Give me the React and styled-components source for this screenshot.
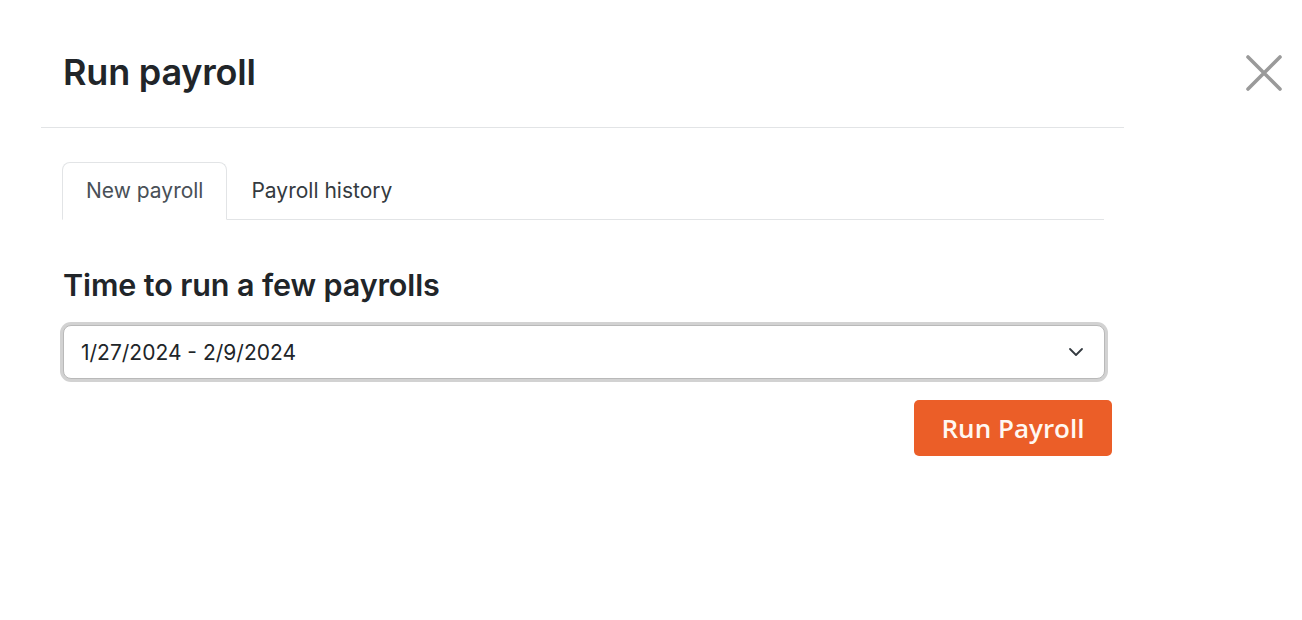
import { useState } from "react"
import styled, { createGlobalStyle } from "styled-components"

const GlobalStyle = createGlobalStyle`
  body {
    margin: 0;
    background: #ffffff;
    font-family: Inter, "Noto Sans", sans-serif;
    color: #212529;
  }
`

const periods = ["1/27/2024 - 2/9/2024", "2/10/2024 - 2/23/2024", "2/24/2024 - 3/8/2024"]

export default function App() {
  const [tab, setTab] = useState("new")
  const [period, setPeriod] = useState(periods[0])

  return (
    <>
      <GlobalStyle />
      <Page>
        <CloseButton aria-label="Close">
          <svg width="38" height="38" viewBox="0 0 38 38">
            <path d="M3 3 L35 35 M35 3 L3 35" stroke="#9a9a9a" strokeWidth="3.6" strokeLinecap="round" />
          </svg>
        </CloseButton>
        <Modal>
          <Header>
            <Title>Run payroll</Title>
          </Header>
          <Body>
            <Tabs>
              <Tab active={tab === "new"} onClick={() => setTab("new")}>New payroll</Tab>
              <Tab active={tab === "history"} onClick={() => setTab("history")}>Payroll history</Tab>
            </Tabs>
            <Heading>Time to run a few payrolls</Heading>
            <SelectWrap>
              <Select value={period} onChange={(e) => setPeriod(e.target.value)}>
                {periods.map((p) => (
                  <option key={p} value={p}>{p}</option>
                ))}
              </Select>
              <Chevron width="16" height="10" viewBox="0 0 16 10">
                <path d="M2 2 L8 8 L14 2" fill="none" stroke="#343a40" strokeWidth="1.8" strokeLinecap="round" strokeLinejoin="round" />
              </Chevron>
            </SelectWrap>
            <Actions>
              <RunButton>Run Payroll</RunButton>
            </Actions>
          </Body>
        </Modal>
      </Page>
    </>
  )
}

const Page = styled.div`
  position: relative;
  width: 1302px;
  height: 620px;
`

const CloseButton = styled.button`
  position: absolute;
  top: 54px;
  left: 1245px;
  padding: 0;
  border: none;
  background: none;
  cursor: pointer;
  display: flex;
`

const Modal = styled.div`
  margin-left: 41px;
  width: 1083px;
`

const Header = styled.div`
  padding: 50px 22px 33px;
  border-bottom: 1px solid #e2e4e6;
`

const Title = styled.h1`
  margin: 0;
  font-size: 36px;
  line-height: 44px;
  font-weight: 600;
  letter-spacing: -0.2px;
  color: #212529;
`

const Body = styled.div`
  padding: 34px 20px 0 21px;
`

const Tabs = styled.div`
  display: flex;
  border-bottom: 1px solid #e2e4e6;
`

const Tab = styled.button`
  margin-bottom: -1px;
  padding: 16px 23px;
  font-family: Inter, "Noto Sans", sans-serif;
  font-size: 21px;
  line-height: 24px;
  color: ${(p) => (p.active ? "#495057" : "#343a40")};
  background: ${(p) => (p.active ? "#ffffff" : "transparent")};
  border: 1px solid ${(p) => (p.active ? "#e2e4e6" : "transparent")};
  border-bottom-color: ${(p) => (p.active ? "#ffffff" : "transparent")};
  border-radius: 8px 8px 0 0;
  cursor: pointer;
`

const Heading = styled.h2`
  margin: 47px 0 0 1px;
  font-size: 30.5px;
  line-height: 36px;
  font-weight: 600;
  letter-spacing: -0.1px;
  color: #212529;
`

const SelectWrap = styled.div`
  position: relative;
  margin: 22px 0 0 1px;
  width: 1042px;
`

const Select = styled.select`
  display: block;
  width: 100%;
  height: 54px;
  padding: 0 50px 0 17px;
  font-family: Inter, "Noto Sans", sans-serif;
  font-size: 21px;
  color: #212529;
  background: #ffffff;
  border: 1px solid #b9b9b9;
  border-radius: 8px;
  box-shadow: 0 0 0 3px #d2d2d2;
  appearance: none;
  outline: none;
`

const Chevron = styled.svg`
  position: absolute;
  right: 21px;
  top: 22px;
  pointer-events: none;
`

const Actions = styled.div`
  display: flex;
  justify-content: flex-end;
  margin-top: 21px;
  margin-right: -8px;
`

const RunButton = styled.button`
  width: 198px;
  height: 56px;
  font-family: "Open Sans", sans-serif;
  font-size: 26px;
  font-weight: 600;
  color: #fff8f2;
  background: #eb5e28;
  border: none;
  border-radius: 5px;
  cursor: pointer;
`
